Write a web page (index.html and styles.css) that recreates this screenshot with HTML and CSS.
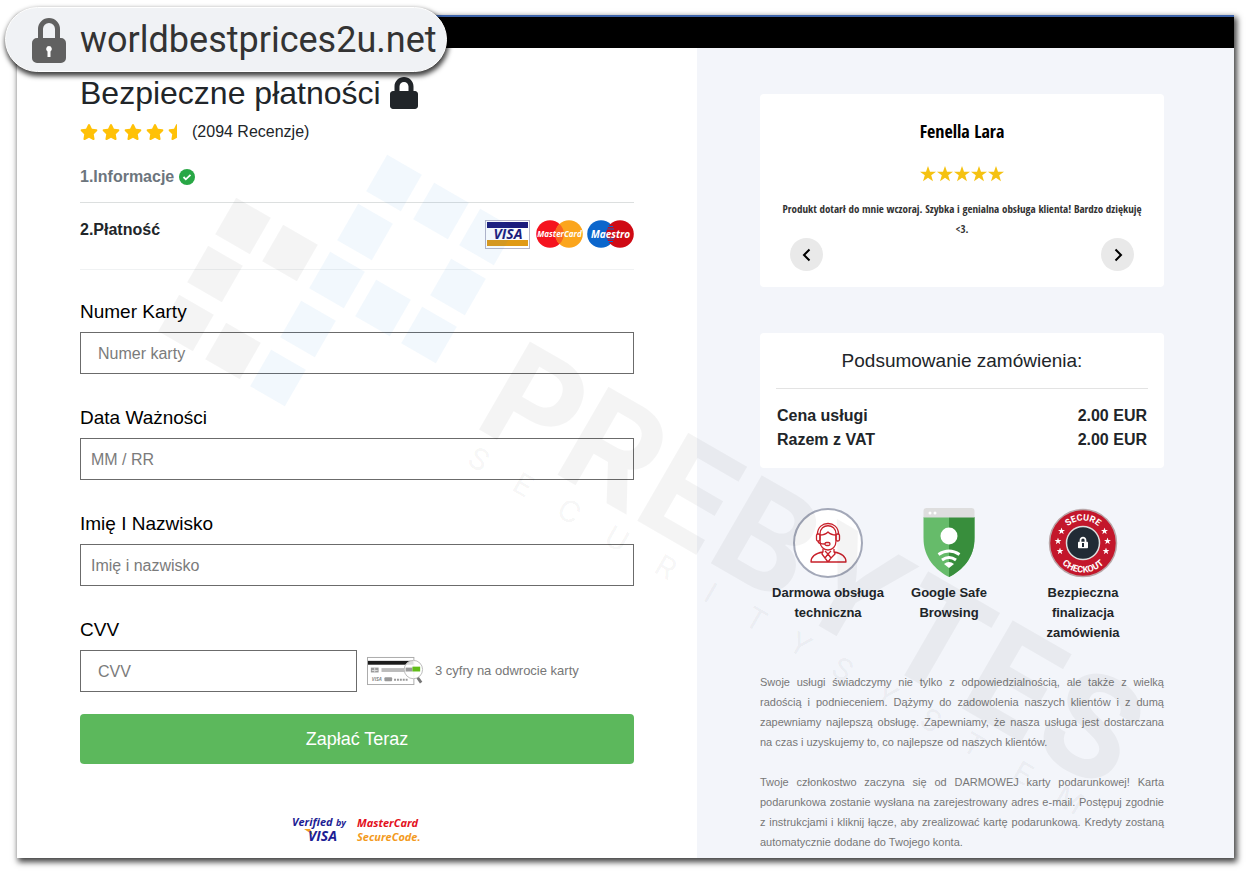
FILE: index.html
```html
<!DOCTYPE html>
<html lang="pl">
<head>
<meta charset="utf-8">
<title>Bezpieczne płatności</title>
<link rel="stylesheet" href="styles.css">
</head>
<body>
<svg class="defs" width="0" height="0" aria-hidden="true">
  <defs>
    <symbol id="star" viewBox="0 0 576 512"><path d="M259.300 17.800L194 150.200 47.900 171.500c-26.200 3.800-36.700 36.100-17.700 54.600l105.700 103-25 145.500c-4.500 26.300 23.200 46 46.400 33.700L288 439.600l130.700 68.700c23.200 12.200 50.900-7.400 46.400-33.700l-25-145.500 105.700-103c19-18.500 8.500-50.800-17.700-54.600L382 150.200 316.700 17.800c-11.700-23.600-45.600-23.900-57.400 0z"/></symbol>
    <symbol id="half" viewBox="0 0 576 512"><path d="M288 0c-11.400 0-22.800 5.900-28.700 17.800L194 150.200 47.900 171.400c-26.200 3.800-36.700 36.100-17.700 54.600l105.700 103-25 145.500c-4.500 26.100 23 46 46.400 33.700L288 439.600z"/></symbol>
    <symbol id="lock" viewBox="0 0 448 512"><path d="M400 224h-24v-72C376 68.200 307.800 0 224 0S72 68.200 72 152v72H48c-26.500 0-48 21.500-48 48v192c0 26.500 21.500 48 48 48h352c26.500 0 48-21.500 48-48V272c0-26.500-21.500-48-48-48zm-104 0H152v-72c0-39.700 32.300-72 72-72s72 32.300 72 72v72z"/></symbol>
    <symbol id="sharp" viewBox="0 0 20 20"><path d="M10 0l2.500 7.100H20l-6 4.600 2.200 7.300L10 14.600 3.800 19 6 11.700 0 7.100h7.500z"/></symbol>
  </defs>
</svg>

<div class="address">
  <svg class="address-lock" viewBox="0 0 34 46" aria-hidden="true"><path d="M6 21V12a11 11 0 0 1 22 0v9h1a5 5 0 0 1 5 5v15a5 5 0 0 1-5 5H5a5 5 0 0 1-5-5V26a5 5 0 0 1 5-5zm5 0h12v-9a6 6 0 0 0-12 0z" fill="#616161"/><path d="M17 29a3 3 0 0 1 1.500 5.500V40h-3v-5.500A3 3 0 0 1 17 29z" fill="#fff"/></svg>
  <span>worldbestprices2u.net</span>
</div>

<div class="page">
  <header class="topbar"></header>
  <div class="columns">
    <main class="checkout">
      <h1>Bezpieczne płatności <svg class="title-lock" aria-hidden="true"><use href="#lock"/></svg></h1>
      <div class="rating">
        <svg><use href="#star"/></svg><svg><use href="#star"/></svg><svg><use href="#star"/></svg><svg><use href="#star"/></svg><svg><use href="#half"/></svg>
        <span>(2094 Recenzje)</span>
      </div>
      <div class="step done">1.Informacje
        <svg viewBox="0 0 16 16" aria-hidden="true"><circle cx="8" cy="8" r="8" fill="#28a745"/><path d="M4.500 8l2.300 2.300 4.700-4.500" fill="none" stroke="#fff" stroke-width="1.800"/></svg>
      </div>
      <div class="step current">
        <span>2.Płatność</span>
        <svg class="brands" viewBox="0 0 150 30" role="img" aria-label="Visa, MasterCard, Maestro">
          <rect x="1.500" y="1.500" width="44" height="28" fill="#fff" stroke="#b5b5c8"/>
          <rect x="3" y="3" width="41" height="6" fill="#1c1c7c"/><rect x="3" y="21" width="41" height="6" fill="#e09a17"/>
          <text x="24" y="20" class="visa">VISA</text>
          <circle cx="66" cy="15" r="13.800" fill="#f5131f"/><circle cx="85" cy="15" r="13.800" fill="#fba51c"/>
          <path d="M75.500 5a13.800 13.800 0 0 1 0 20a13.800 13.800 0 0 1 0-20z" fill="#f96620"/>
          <text x="75.500" y="18" class="mc">MasterCard</text>
          <circle cx="117" cy="15" r="13.800" fill="#0b66cc"/><circle cx="136" cy="15" r="13.800" fill="#cf0a14"/>
          <path d="M124 7.500h5M123 10h7M123 20h7M124 22.500h5" stroke="#0b66cc"/>
          <text x="126.500" y="18.500" class="maestro">Maestro</text>
        </svg>
      </div>

      <form>
        <div class="field"><label for="card">Numer Karty</label><input id="card" class="wide" type="text" placeholder="Numer karty"></div>
        <div class="field"><label for="date">Data Ważności</label><input id="date" type="text" placeholder="MM / RR"></div>
        <div class="field"><label for="name">Imię I Nazwisko</label><input id="name" type="text" placeholder="Imię i nazwisko"></div>
        <div class="field"><label for="cvv">CVV</label>
          <div class="cvv-row">
            <input id="cvv" class="wide" type="text" placeholder="CVV">
            <svg class="cvv-card" viewBox="0 0 60 31" aria-hidden="true">
              <rect x="0.500" y="1.500" width="48" height="28" fill="#fff" stroke="#aaa"/>
              <rect x="1" y="5" width="47" height="4" fill="#1b1b1b"/>
              <rect x="4" y="12" width="8" height="5" fill="#999"/><path d="M5 15h6M8 12v5" stroke="#ddd"/>
              <rect x="15" y="12.500" width="27" height="4" fill="#bbb"/>
              <text x="5" y="26" class="tiny">VISA</text>
              <rect x="18" y="22" width="8" height="4" rx="1" fill="#999"/><path d="M28 24.500h15" stroke="#999" stroke-width="2" stroke-dasharray="2 1"/>
              <circle cx="48" cy="14" r="9.500" fill="#fff" fill-opacity=".85" stroke="#bbb"/>
              <rect x="40" y="12" width="7" height="4" fill="#999"/><rect x="47" y="11" width="8" height="5" fill="#62bd19"/>
              <path d="M52.500 22.500l3.500 5" stroke="#777" stroke-width="3"/>
            </svg>
            <span>3 cyfry na odwrocie karty</span>
          </div>
        </div>
        <button type="button" class="pay">Zapłać Teraz</button>
      </form>
      <svg class="secure" viewBox="0 0 132 30" role="img" aria-label="Verified by Visa, MasterCard SecureCode">
        <text x="1" y="12" class="vf">Verified</text><text x="45" y="12" class="by">by</text>
        <path d="M13 15h6l3 6z" fill="#f0a020"/><text x="17" y="27" class="vf big">VISA</text>
        <text x="66" y="13" class="ms">MasterCard</text><text x="66" y="27" class="sc">SecureCode.</text>
      </svg>
    </main>

    <aside class="side">
      <section class="card review">
        <h2>Fenella Lara</h2>
        <div class="stars"><svg><use href="#sharp"/></svg><svg><use href="#sharp"/></svg><svg><use href="#sharp"/></svg><svg><use href="#sharp"/></svg><svg><use href="#sharp"/></svg></div>
        <p>Produkt dotarł do mnie wczoraj. Szybka i genialna obsługa klienta! Bardzo dziękuję &lt;3.</p>
        <div class="arrows">
          <button type="button" aria-label="Poprzednia"><svg viewBox="0 0 10 14"><path d="M7.500 1.500L2 7l5.500 5.500"/></svg></button>
          <button type="button" aria-label="Następna"><svg viewBox="0 0 10 14"><path d="M2.500 1.500L8 7l-5.500 5.500"/></svg></button>
        </div>
      </section>

      <section class="card summary">
        <h2>Podsumowanie zamówienia:</h2>
        <dl>
          <div><dt>Cena usługi</dt><dd>2.00 EUR</dd></div>
          <div><dt>Razem z VAT</dt><dd>2.00 EUR</dd></div>
        </dl>
      </section>

      <section class="badges">
        <figure>
          <svg viewBox="0 0 70 70" aria-hidden="true">
            <circle cx="35" cy="35" r="34" fill="#fff" stroke="#a3a8b8" stroke-width="2"/>
            <g fill="none" stroke="#c8202a" stroke-width="1.300" stroke-linejoin="round">
              <path d="M24.500 26c0-14 21-14 21 0M27 26c0-11 16-11 16 0v7c0 6-4 9-8 9s-8-3-8-9zM27 27c4 0 7-2 8-3 2 2 5 3 8 3"/>
              <rect x="23.500" y="26" width="3.500" height="7" rx="1.500"/><rect x="43" y="26" width="3.500" height="7" rx="1.500"/>
              <path d="M25 33c0 3 3 3 7 3"/><rect x="32" y="34.500" width="5" height="3" rx="1.500"/>
              <path d="M30 41v3c-6 1-12 3-12 10h35c0-7-6-9-12-10v-3M30 43l-1 3 3 4 3-4 3 4 4-4-1-3M32 43l3 3 3-3M32 50l3 4 3-4"/>
            </g>
          </svg>
          <figcaption>Darmowa obsługa techniczna</figcaption>
        </figure>
        <figure>
          <svg viewBox="0 0 70 70" aria-hidden="true">
            <path d="M9.500 9h51v21c0 20-12 32-25.500 39C21.500 62 9.500 50 9.500 30z" fill="#66bb6a"/>
            <path d="M35 9h25.500v21c0 20-12 32-25.500 39z" fill="#388e3c"/>
            <path d="M9.500 9.500V3a3 3 0 0 1 3-3h45a3 3 0 0 1 3 3v6.500z" fill="#dedede"/>
            <circle cx="16" cy="5" r="1.500" fill="#fff"/><circle cx="21" cy="5" r="1.500" fill="#fff"/>
            <circle cx="35" cy="28" r="8.500" fill="#fff"/>
            <path d="M24.500 46.500q10.500-7 21 0M28 52q7-5 14 0" fill="none" stroke="#fff" stroke-width="3"/><path d="M30 56q5-4 10 0L35 60z" fill="#fff"/>
          </svg>
          <figcaption>Google Safe Browsing</figcaption>
        </figure>
        <figure>
          <svg viewBox="0 0 70 70" aria-hidden="true">
            <circle cx="35" cy="35" r="33.500" fill="#c3172b" stroke="#b9a6a8" stroke-width="1.500"/>
            <circle cx="35" cy="35" r="16.500" fill="#212b35" stroke="#ddd" stroke-width="1.500"/>
            <path id="arcTop" d="M12.500 35a22.500 22.500 0 0 1 45 0" fill="none"/><path id="arcBottom" d="M5.500 35a29.500 29.500 0 0 0 59 0" fill="none"/>
            <text class="seal"><textPath href="#arcTop" startOffset="50%">SECURE</textPath></text>
            <text class="seal"><textPath href="#arcBottom" startOffset="50%">CHECKOUT</textPath></text>
            <g fill="#fff">
              <use href="#sharp" x="10" y="19.500" width="7" height="7"/><use href="#sharp" x="6.500" y="29.500" width="7" height="7"/><use href="#sharp" x="8.500" y="39.500" width="7" height="7"/>
              <use href="#sharp" x="53" y="19.500" width="7" height="7"/><use href="#sharp" x="56" y="29.500" width="7" height="7"/><use href="#sharp" x="54.500" y="39.500" width="7" height="7"/>
              <use href="#lock" x="30" y="28" width="10" height="13"/>
            </g>
            <path d="M35 35v4" stroke="#212b35" stroke-width="2"/>
          </svg>
          <figcaption class="narrow">Bezpieczna finalizacja zamówienia</figcaption>
        </figure>
      </section>

      <div class="notes">
        <p>Swoje usługi świadczymy nie tylko z odpowiedzialnością, ale także z wielką radością i podnieceniem. Dążymy do zadowolenia naszych klientów i z dumą zapewniamy najlepszą obsługę. Zapewniamy, że nasza usługa jest dostarczana na&nbsp;czas i uzyskujemy to, co najlepsze od naszych klientów.</p>
        <p>Twoje członkostwo zaczyna się od DARMOWEJ karty podarunkowej! Karta podarunkowa zostanie wysłana na zarejestrowany adres e-mail. Postępuj zgodnie z instrukcjami i kliknij łącze, aby zrealizować kartę podarunkową. Kredyty zostaną automatycznie dodane do Twojego konta.</p>
      </div>
    </aside>
  </div>
</div>

<svg class="watermark" viewBox="0 0 1249 873" aria-hidden="true">
  <g class="grey">
    <rect x="-20" y="-21" width="40" height="42" transform="translate(243 226) rotate(30)"/>
    <rect x="-20" y="-21" width="40" height="42" transform="translate(290 253) rotate(30)"/>
    <rect x="-20" y="-21" width="40" height="42" transform="translate(215 274) rotate(30)"/>
    <rect x="-20" y="-21" width="40" height="42" transform="translate(186 323) rotate(30)"/>
    <rect x="-20" y="-21" width="40" height="42" transform="translate(233 351) rotate(30)"/>
    <text class="brand" transform="translate(471 425) rotate(30)">PREBYTES</text>
    <text class="tag" transform="translate(473 468) rotate(30)" x="-9 43 94 149 207 264 311 361 411 461 513 562 620 669">SECURITYSYSTEM</text>
  </g>
  <g class="blue">
    <rect x="-20" y="-21" width="40" height="42" transform="translate(394 183) rotate(30)"/>
    <rect x="-20" y="-21" width="40" height="42" transform="translate(441 211) rotate(30)"/>
    <rect x="-20" y="-21" width="40" height="42" transform="translate(487 237) rotate(30)"/>
    <rect x="-20" y="-21" width="40" height="42" transform="translate(365 232) rotate(30)"/>
    <rect x="-20" y="-21" width="40" height="42" transform="translate(337 280) rotate(30)"/>
    <rect x="-20" y="-21" width="40" height="42" transform="translate(383 308) rotate(30)"/>
    <rect x="-20" y="-21" width="40" height="42" transform="translate(458 287) rotate(30)"/>
    <rect x="-20" y="-21" width="40" height="42" transform="translate(429 335) rotate(30)"/>
    <rect x="-20" y="-21" width="40" height="42" transform="translate(308 329) rotate(30)"/>
    <rect x="-20" y="-21" width="40" height="42" transform="translate(278 378) rotate(30)"/>
  </g>
</svg>
</body>
</html>
```

FILE: styles.css
```css
* { box-sizing: border-box; }
body {
  margin: 0;
  padding: 15px 15px 15px 17px;
  background: #fff;
  color: #212529;
  font: 16px/24px "Liberation Sans", Arial, sans-serif;
  position: relative;
}
h1, h2, p, dl, dd, figure { margin: 0; }
.defs { position: absolute; }

.page { background: #fff; box-shadow: 2px 3px 6px 1px rgba(0, 0, 0, .75); }
.topbar { height: 33px; background: #000; border-top: 2px solid #3d64ab; }
.columns { display: grid; grid-template-columns: 680fr 537fr; }

.address {
  position: absolute;
  z-index: 3;
  left: 5px;
  top: 7px;
  display: flex;
  align-items: center;
  gap: 14px;
  height: 65px;
  padding: 0 9px 0 26px;
  border-radius: 33px;
  background: #f0f2f5;
  border: 1px solid #fff;
  box-shadow: 1px 3px 5px 1px rgba(0, 0, 0, .75);
  color: #333;
  font: 400 36px/64px Roboto, "Open Sans", sans-serif;
}
.address-lock { width: 34px; height: 46px; }

.checkout { padding: 27px 63px 0; }
h1 { display: flex; align-items: center; gap: 9px; font-size: 32px; line-height: 36px; font-weight: 400; }
.title-lock { width: 28px; height: 32px; fill: #212529; }
.rating { display: flex; align-items: center; gap: 4px; height: 24px; margin-top: 9px; }
.rating svg { width: 18px; height: 16px; fill: #ffc107; }
.rating span { margin-left: 2px; }
.step { display: flex; align-items: center; font-weight: 700; }
.done { gap: 5px; height: 24px; margin-top: 21px; color: #6c757d; }
.done svg { width: 16px; height: 16px; }
.current {
  justify-content: space-between;
  align-items: flex-start;
  margin-top: 13px;
  padding-top: 15px;
  height: 68px;
  border-top: 1px solid #dcdfdf;
  border-bottom: 1px solid #f0f2f3;
}
.brands { width: 150px; height: 30px; margin-top: 1px; }
.brands text { text-anchor: middle; font-family: "Open Sans", sans-serif; font-weight: 700; font-style: italic; fill: #fff; }
.brands .visa { font-size: 14px; fill: #1c1c7c; }
.brands .mc { font-size: 8px; }
.brands .maestro { font-size: 10px; }

form { margin-top: 27px; }
.field { margin-bottom: 29px; }
.field:last-of-type { margin-bottom: 22px; }
label { display: block; margin-bottom: 7px; padding-top: 1px; font-size: 19px; line-height: 27px; color: #000; }
input {
  display: block;
  width: 100%;
  height: 42px;
  padding: 2px 10px 0;
  border: 1px solid #6b6b6b;
  border-radius: 0;
  background: #fff;
  color: #333;
  font: 16px "Liberation Sans", Arial, sans-serif;
}
input.wide { padding: 2px 17px 0; }
input::placeholder { color: #7b7b7b; opacity: 1; }
.cvv-row { display: flex; align-items: center; gap: 10px; color: #777; font-size: 13px; }
.cvv-row input { width: 50%; }
.cvv-card { width: 58px; height: 30px; }
.tiny { font: italic 700 5px "Open Sans", sans-serif; fill: #888; }
.pay {
  display: block;
  width: 100%;
  height: 50px;
  border: 0;
  border-radius: 4px;
  background: #5cb85c;
  color: #fff;
  font: 18px "Liberation Sans", Arial, sans-serif;
}
.secure { display: block; width: 132px; height: 30px; margin: 50px auto 0; }
.secure text { font-family: "Open Sans", sans-serif; font-style: italic; font-weight: 700; font-size: 11px; }
.secure .vf { fill: #1d1d94; }
.secure .by { fill: #1d1d94; font-size: 9px; }
.secure .big { font-size: 14px; }
.secure .ms { fill: #e3101c; }
.secure .sc { fill: #f39a1d; }

.side { padding: 46px 70px 6px 63px; background: #f3f5fa; }
.card { background: #fff; border-radius: 4px; }
.review { padding: 25px 19px 16px; text-align: center; color: #000; font-family: "Open Sans Condensed", "Open Sans", sans-serif; }
.review h2 { font-size: 18px; line-height: 24px; }
.stars { display: flex; justify-content: center; gap: 1px; margin: 23px 0 17px; }
.stars svg { width: 16px; height: 16px; fill: #f5c211; }
.review p { color: #333; font-size: 11px; line-height: 20px; font-weight: 300; }
.arrows { display: flex; justify-content: space-between; margin-top: -1px; padding: 0 11px; }
.arrows button { display: grid; place-items: center; width: 33px; height: 33px; padding: 0; border: 0; border-radius: 50%; background: #e9e9e9; }
.arrows svg { width: 10px; height: 14px; fill: none; stroke: #000; stroke-width: 2; }

.summary { margin-top: 46px; padding: 14px 16px 16px; }
.summary h2 { padding-bottom: 14px; border-bottom: 1px solid #e3e3e3; font-size: 19px; line-height: 27px; font-weight: 400; text-align: center; }
.summary dl { padding: 15px 1px 0; font-size: 16px; font-weight: 700; }
.summary dl div { display: flex; justify-content: space-between; }

.badges { display: grid; grid-template-columns: 136fr 106fr 162fr; margin-top: 40px; }
.badges figure { text-align: center; }
.badges svg { display: block; width: 70px; height: 70px; margin: 0 auto 5px; }
.badges figcaption { margin: 0 auto; font-size: 13px; line-height: 20px; font-weight: 700; }
.badges .narrow { max-width: 90px; }
.seal { fill: #fff; font: 700 9px Roboto, sans-serif; text-anchor: middle; }

.notes { margin-top: 29px; color: #777; font-size: 11px; line-height: 20px; text-align: justify; }
.notes p + p { margin-top: 20px; }

.watermark { position: absolute; z-index: 2; left: 0; top: 0; width: 100%; pointer-events: none; }
.grey { fill: #000; fill-opacity: .045; }
.blue { fill: #1e88e5; fill-opacity: .06; }
.brand { font: 700 140px Inter, sans-serif; }
.tag { font: 500 30px Inter, sans-serif; fill-opacity: .035; }
```
